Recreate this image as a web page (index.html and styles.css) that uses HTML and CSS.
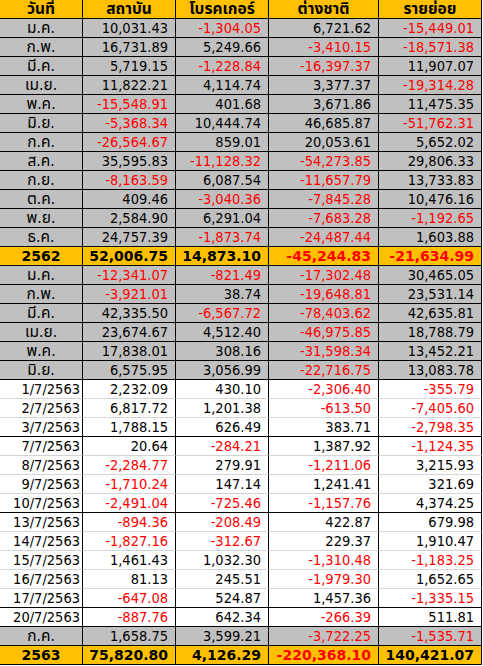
FILE: index.html
```html
<!DOCTYPE html>
<html lang="th">
<head>
<meta charset="utf-8">
<title>Investor flows</title>
<link rel="stylesheet" href="styles.css">
</head>
<body>
<table class="sheet">
  <colgroup>
    <col class="c-date"><col class="c-num"><col class="c-num"><col class="c-wide"><col class="c-last">
  </colgroup>
  <thead>
    <tr class="head"><th>วันที่</th><th>สถาบัน</th><th>โบรคเกอร์</th><th>ต่างชาติ</th><th>รายย่อย</th></tr>
  </thead>
  <tbody>
    <tr class="month"><td class="lbl">ม.ค.</td><td>10,031.43</td><td class="neg">-1,304.05</td><td>6,721.62</td><td class="neg">-15,449.01</td></tr>
    <tr class="month"><td class="lbl">ก.พ.</td><td>16,731.89</td><td>5,249.66</td><td class="neg">-3,410.15</td><td class="neg">-18,571.38</td></tr>
    <tr class="month"><td class="lbl">มี.ค.</td><td>5,719.15</td><td class="neg">-1,228.84</td><td class="neg">-16,397.37</td><td>11,907.07</td></tr>
    <tr class="month"><td class="lbl">เม.ย.</td><td>11,822.21</td><td>4,114.74</td><td>3,377.37</td><td class="neg">-19,314.28</td></tr>
    <tr class="month"><td class="lbl">พ.ค.</td><td class="neg">-15,548.91</td><td>401.68</td><td>3,671.86</td><td>11,475.35</td></tr>
    <tr class="month"><td class="lbl">มิ.ย.</td><td class="neg">-5,368.34</td><td>10,444.74</td><td>46,685.87</td><td class="neg">-51,762.31</td></tr>
    <tr class="month"><td class="lbl">ก.ค.</td><td class="neg">-26,564.67</td><td>859.01</td><td>20,053.61</td><td>5,652.02</td></tr>
    <tr class="month"><td class="lbl">ส.ค.</td><td>35,595.83</td><td class="neg">-11,128.32</td><td class="neg">-54,273.85</td><td>29,806.33</td></tr>
    <tr class="month"><td class="lbl">ก.ย.</td><td class="neg">-8,163.59</td><td>6,087.54</td><td class="neg">-11,657.79</td><td>13,733.83</td></tr>
    <tr class="month"><td class="lbl">ต.ค.</td><td>409.46</td><td class="neg">-3,040.36</td><td class="neg">-7,845.28</td><td>10,476.16</td></tr>
    <tr class="month"><td class="lbl">พ.ย.</td><td>2,584.90</td><td>6,291.04</td><td class="neg">-7,683.28</td><td class="neg">-1,192.65</td></tr>
    <tr class="month"><td class="lbl">ธ.ค.</td><td>24,757.39</td><td class="neg">-1,873.74</td><td class="neg">-24,487.44</td><td>1,603.88</td></tr>
    <tr class="total"><td class="lbl">2562</td><td>52,006.75</td><td>14,873.10</td><td class="neg">-45,244.83</td><td class="neg">-21,634.99</td></tr>
    <tr class="month"><td class="lbl">ม.ค.</td><td class="neg">-12,341.07</td><td class="neg">-821.49</td><td class="neg">-17,302.48</td><td>30,465.05</td></tr>
    <tr class="month"><td class="lbl">ก.พ.</td><td class="neg">-3,921.01</td><td>38.74</td><td class="neg">-19,648.81</td><td>23,531.14</td></tr>
    <tr class="month"><td class="lbl">มี.ค.</td><td>42,335.50</td><td class="neg">-6,567.72</td><td class="neg">-78,403.62</td><td>42,635.81</td></tr>
    <tr class="month"><td class="lbl">เม.ย.</td><td>23,674.67</td><td>4,512.40</td><td class="neg">-46,975.85</td><td>18,788.79</td></tr>
    <tr class="month"><td class="lbl">พ.ค.</td><td>17,838.01</td><td>308.16</td><td class="neg">-31,598.34</td><td>13,452.21</td></tr>
    <tr class="month"><td class="lbl">มิ.ย.</td><td>6,575.95</td><td>3,056.99</td><td class="neg">-22,716.75</td><td>13,083.78</td></tr>
    <tr class="day"><td class="dt">1/7/2563</td><td>2,232.09</td><td>430.10</td><td class="neg">-2,306.40</td><td class="neg">-355.79</td></tr>
    <tr class="day"><td class="dt">2/7/2563</td><td>6,817.72</td><td>1,201.38</td><td class="neg">-613.50</td><td class="neg">-7,405.60</td></tr>
    <tr class="day week-end"><td class="dt">3/7/2563</td><td>1,788.15</td><td>626.49</td><td>383.71</td><td class="neg">-2,798.35</td></tr>
    <tr class="day"><td class="dt">7/7/2563</td><td>20.64</td><td class="neg">-284.21</td><td>1,387.92</td><td class="neg">-1,124.35</td></tr>
    <tr class="day"><td class="dt">8/7/2563</td><td class="neg">-2,284.77</td><td>279.91</td><td class="neg">-1,211.06</td><td>3,215.93</td></tr>
    <tr class="day"><td class="dt">9/7/2563</td><td class="neg">-1,710.24</td><td>147.14</td><td>1,241.41</td><td>321.69</td></tr>
    <tr class="day week-end"><td class="dt">10/7/2563</td><td class="neg">-2,491.04</td><td class="neg">-725.46</td><td class="neg">-1,157.76</td><td>4,374.25</td></tr>
    <tr class="day"><td class="dt">13/7/2563</td><td class="neg">-894.36</td><td class="neg">-208.49</td><td>422.87</td><td>679.98</td></tr>
    <tr class="day"><td class="dt">14/7/2563</td><td class="neg">-1,827.16</td><td class="neg">-312.67</td><td>229.37</td><td>1,910.47</td></tr>
    <tr class="day"><td class="dt">15/7/2563</td><td>1,461.43</td><td>1,032.30</td><td class="neg">-1,310.48</td><td class="neg">-1,183.25</td></tr>
    <tr class="day"><td class="dt">16/7/2563</td><td>81.13</td><td>245.51</td><td class="neg">-1,979.30</td><td>1,652.65</td></tr>
    <tr class="day week-end"><td class="dt">17/7/2563</td><td class="neg">-647.08</td><td>524.87</td><td>1,457.36</td><td class="neg">-1,335.15</td></tr>
    <tr class="day week-end"><td class="dt">20/7/2563</td><td class="neg">-887.76</td><td>642.34</td><td class="neg">-266.39</td><td>511.81</td></tr>
    <tr class="month"><td class="lbl">ก.ค.</td><td>1,658.75</td><td>3,599.21</td><td class="neg">-3,722.25</td><td class="neg">-1,535.71</td></tr>
    <tr class="total"><td class="lbl">2563</td><td>75,820.80</td><td>4,126.29</td><td class="neg">-220,368.10</td><td>140,421.07</td></tr>
  </tbody>
</table>
</body>
</html>
```
FILE: styles.css
```css
html, body {
  margin: 0;
  padding: 0;
  background: #ffffff;
}

.sheet {
  border-collapse: separate;
  border-spacing: 0;
  table-layout: fixed;
  width: 482px;
  font-family: "DejaVu Sans Condensed", "DejaVu Sans", "Noto Sans Thai", "Noto Sans", sans-serif;
  font-size: 14.5px;
  color: #000000;
}

.c-date { width: 83px; }
.c-num { width: 93px; }
.c-wide { width: 110px; }
.c-last { width: 103px; }

.sheet th,
.sheet td {
  box-sizing: border-box;
  height: 19px;
  padding: 0 7px 0 0;
  line-height: 18px;
  border-right: 1px solid #000000;
  border-bottom: 1px solid #000000;
  text-align: right;
  white-space: nowrap;
  overflow: hidden;
  vertical-align: middle;
}

.head th {
  background: #ffc000;
  font-size: 15.5px;
  font-weight: bold;
  text-align: center;
  padding: 0;
}

.month td {
  background: #c0c0c0;
}

.total td {
  background: #ffc000;
  font-family: "DejaVu Sans", "Noto Sans", sans-serif;
  font-size: 14px;
  font-weight: bold;
}

.day td {
  background: #ffffff;
  border-bottom-color: #d4d4d4;
}

.day.week-end td {
  border-bottom-color: #000000;
}

.sheet td.lbl {
  text-align: center;
  padding: 0;
}

.month td.lbl {
  font-size: 15.5px;
}

.sheet td.dt {
  padding-right: 2px;
}

.sheet td.neg {
  color: #ff0000;
}
```
